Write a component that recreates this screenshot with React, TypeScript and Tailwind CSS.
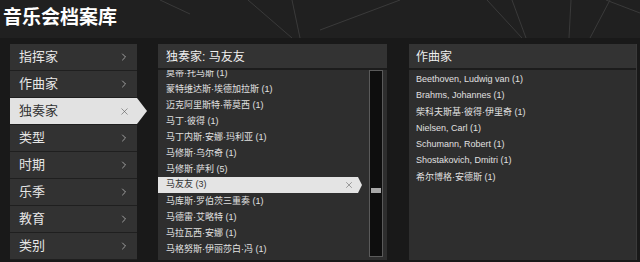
import { ChevronRight, X } from "lucide-react";

const categories = ["指挥家", "作曲家", "独奏家", "类型", "时期", "乐季", "教育", "类别"];

const soloists = [
  { name: "莫蒂·托马斯 (1)" },
  { name: "蒙特维达斯·埃德加拉斯 (1)" },
  { name: "迈克阿里斯特·蒂莫西 (1)" },
  { name: "马丁·彼得 (1)" },
  { name: "马丁内斯·安娜·玛利亚 (1)" },
  { name: "马修斯·乌尔奇 (1)" },
  { name: "马修斯·萨利 (5)" },
  { name: "马友友 (3)", active: true },
  { name: "马库斯·罗伯茨三重奏 (1)" },
  { name: "马德雷·艾略特 (1)" },
  { name: "马拉瓦西·安娜 (1)" },
  { name: "马格努斯·伊丽莎白·冯 (1)" },
];

const composers = [
  "Beethoven, Ludwig van (1)",
  "Brahms, Johannes (1)",
  "柴科夫斯基·彼得·伊里奇 (1)",
  "Nielsen, Carl (1)",
  "Schumann, Robert (1)",
  "Shostakovich, Dmitri (1)",
  "希尔博格·安德斯 (1)",
];

const font = "font-['Liberation_Sans','Noto_Sans_CJK_SC',sans-serif]";

export default function App() {
  return (
    <div className={`relative h-[262px] w-[640px] overflow-hidden bg-[#191919] ${font}`}>
      {/* Header */}
      <div className="relative h-[38px] bg-[#202020]">
        <svg className="absolute inset-0" width="640" height="38" viewBox="0 0 640 38">
          <g stroke="#3a3a3a" strokeWidth="1" fill="none">
            <line x1="160" y1="0" x2="190" y2="14" />
            <line x1="248" y1="0" x2="292" y2="38" />
            <line x1="292" y1="0" x2="300" y2="38" />
            <line x1="320" y1="30" x2="400" y2="0" />
            <line x1="487" y1="0" x2="522" y2="38" />
            <line x1="512" y1="0" x2="526" y2="38" />
            <line x1="571" y1="0" x2="569" y2="38" />
            <line x1="610" y1="0" x2="590" y2="38" />
            <line x1="606" y1="0" x2="640" y2="13" />
          </g>
        </svg>
        <h1 className="relative px-[3px] pt-[6px] text-[19px] font-bold leading-[24px] text-white">
          音乐会档案库
        </h1>
      </div>

      {/* Body */}
      <div className="flex pl-[10px] pt-[6px]">
        {/* Left categories */}
        <div className="flex w-[127px] flex-col gap-px bg-[#1f1f1f]">
          {categories.map((c) =>
            c === "独奏家" ? (
              <div
                key={c}
                className="flex h-[26px] w-[137px] items-center bg-[#e2e2e2] pl-[9px] pr-[17px] text-[13px] text-[#333] [clip-path:polygon(0_0,127px_0,137px_50%,127px_100%,0_100%)]"
              >
                <span className="flex-1">{c}</span>
                <X size={11} strokeWidth={1.25} className="text-[#555]" />
              </div>
            ) : (
              <div
                key={c}
                className="flex h-[26px] items-center bg-[#323232] pl-[9px] pr-[7px] text-[13px] text-[#e6e6e6]"
              >
                <span className="flex-1">{c}</span>
                <ChevronRight size={12} strokeWidth={1.5} className="text-[#c4c4c4]" />
              </div>
            )
          )}
        </div>

        {/* Middle: soloists */}
        <div className="ml-[21px] flex h-[216px] w-[229px] flex-col bg-[#2e2e2e]">
          <div className="h-[26px] border-b-2 border-[#1c1c1c] bg-[#333] pl-[8px] pt-[1px] text-[12px] leading-[24px] text-[#eee]">
            独奏家: 马友友
          </div>
          <div className="flex min-h-0 flex-1">
            <div className="flex-1 overflow-hidden">
              <div className="-mt-[5px]">
                {soloists.map((s) =>
                  s.active ? (
                    <div
                      key={s.name}
                      className="flex h-[16px] w-[204px] items-center bg-[#e4e4e4] pl-[8px] pr-[8px] text-[9px] text-[#333] [clip-path:polygon(0_0,200px_0,204px_50%,200px_100%,0_100%)]"
                    >
                      <span className="flex-1">{s.name}</span>
                      <X size={10} strokeWidth={1.25} className="text-[#555]" />
                    </div>
                  ) : (
                    <div key={s.name} className="h-[16px] whitespace-nowrap pl-[8px] text-[9px] leading-[16px] text-[#e0e0e0]">
                      {s.name}
                    </div>
                  )
                )}
              </div>
            </div>
            <div className="mb-[3px] mr-[4px] flex w-[14px] flex-col border border-[#5a5a5a] bg-[#0e0e0e] pt-[117px]">
              <div className="mx-[1px] h-[5px] bg-[#a8a8a8]" />
            </div>
          </div>
        </div>

        {/* Right: composers */}
        <div className="ml-[22px] flex h-[216px] w-[228px] flex-col border-r border-[#3a3a3a] bg-[#2e2e2e]">
          <div className="h-[26px] border-b-2 border-[#1c1c1c] bg-[#333] pl-[7px] pt-[1px] text-[12px] leading-[24px] text-[#eee]">
            作曲家
          </div>
          <div className="pt-[1px]">
            {composers.map((c) => (
              <div key={c} className="h-[16.25px] whitespace-nowrap pl-[7px] text-[9px] leading-[16px] text-[#e0e0e0]">
                {c}
              </div>
            ))}
          </div>
        </div>
      </div>
    </div>
  );
}
